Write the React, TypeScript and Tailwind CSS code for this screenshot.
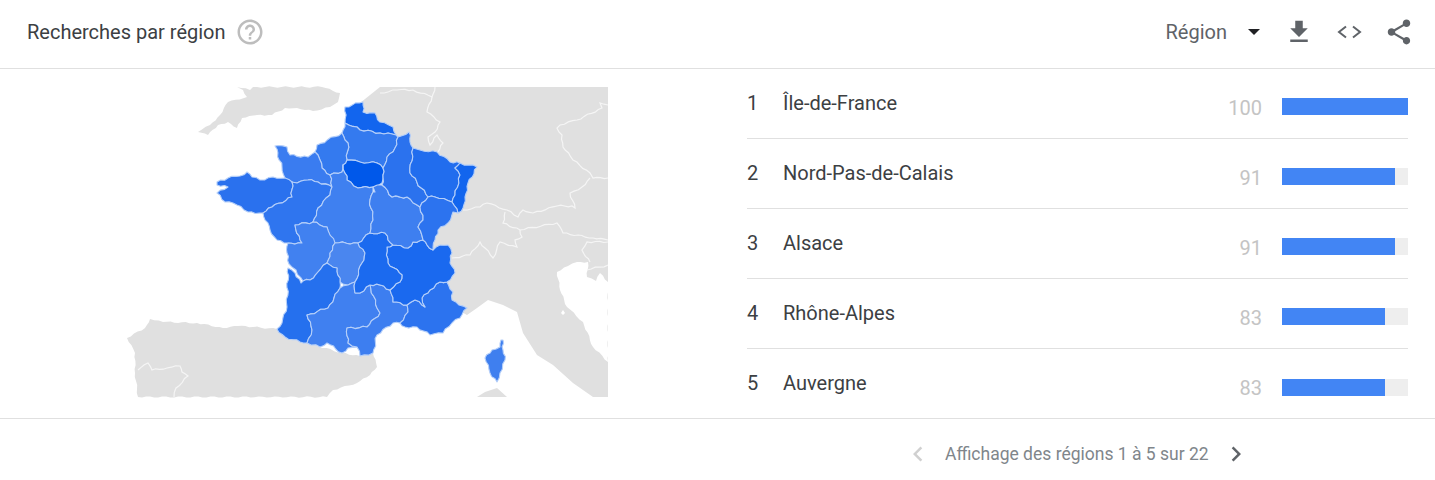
import React from 'react';

const rows = [
  { rank: 1, name: 'Île-de-France', value: 100, width: 100 },
  { rank: 2, name: 'Nord-Pas-de-Calais', value: 91, width: 90 },
  { rank: 3, name: 'Alsace', value: 91, width: 90 },
  { rank: 4, name: 'Rhône-Alpes', value: 83, width: 82 },
  { rank: 5, name: 'Auvergne', value: 83, width: 82 },
];

const regions: { fill: string; points: string }[] = [
  { fill: '#1265ee', points: '345,107 363,102 363,112 375,113 380,122 393,127 396,135 380,133 360,130 357,127 345,123' },
  { fill: '#347aef', points: '345,123 357,127 360,130 380,133 396,135 398,137 395,148 387,157 383,168 377,163 360,162 347,160 348,143 342,133' },
  { fill: '#347aef', points: '342,133 317,145 315,152 318,155 322,168 330,175 342,172 343,165 347,160 348,143' },
  { fill: '#3a7cf0', points: '275,146 287,147 290,155 308,157 315,152 318,155 322,168 330,175 332,187 318,182 308,180 297,183 285,178 282,167' },
  { fill: '#2a71ee', points: '217,182 228,178 240,176 247,172 252,177 260,180 273,177 285,178 292,182 292,197 272,207 263,213 248,212 233,203 225,202 217,193 228,187 217,185' },
  { fill: '#2f75ef', points: '292,182 297,183 308,180 318,182 332,187 330,195 318,208 313,222 295,225 300,240 302,243 288,243 277,240 270,230 263,213 272,207 292,197' },
  { fill: '#0058ea', points: '343,165 347,160 360,162 377,163 383,168 383,175 382,183 373,187 358,188 347,180' },
  { fill: '#3f80f0', points: '330,175 342,172 343,165 347,180 358,188 373,187 373,192 370,200 373,220 370,233 358,243 335,243 332,238 327,227 313,222 318,208 330,195 332,187' },
  { fill: '#4181f0', points: '295,225 313,222 327,227 335,243 330,253 327,263 318,272 310,280 303,281 296,270 289,264 287,253 288,243 302,243 300,240' },
  { fill: '#4a86ef', points: '330,253 335,243 358,243 365,253 362,263 355,282 348,285 340,282 337,268 327,263' },
  { fill: '#2570ee', points: '288,268 295,273 301,283 303,281 310,280 318,272 327,263 337,268 340,282 340,288 328,308 307,315 312,330 307,343 300,342 285,337 277,329 282,323 287,307' },
  { fill: '#4080f0', points: '307,343 312,330 307,315 328,308 340,288 348,285 355,282 355,293 360,293 370,285 377,308 380,313 367,327 347,328 348,343 357,347 348,348 342,353 327,343 320,347' },
  { fill: '#3d7ef0', points: '370,285 380,285 390,290 393,302 407,305 408,312 400,323 393,323 377,335 373,353 360,356 357,347 348,343 347,328 367,327 380,313 377,308' },
  { fill: '#2c73ef', points: '407,305 415,300 425,307 422,298 430,290 440,282 447,282 453,292 452,300 467,308 460,318 452,323 443,333 430,335 417,327 405,327 400,323 408,312' },
  { fill: '#1a69ef', points: '387,247 388,263 402,275 400,282 390,290 393,302 407,305 415,300 425,307 422,298 430,290 440,282 447,282 455,273 450,263 452,253 448,245 440,245 433,250 427,245 423,240 413,242 408,248 393,245' },
  { fill: '#1b6aef', points: '370,233 385,233 388,240 393,245 387,247 388,263 402,275 400,282 390,290 380,285 370,285 360,293 355,293 355,282 362,263 365,253 358,243' },
  { fill: '#3e7ff0', points: '373,192 375,192 373,187 382,185 392,197 407,197 420,207 423,220 418,227 423,240 413,242 408,248 393,245 388,240 385,233 370,233 373,220 370,200' },
  { fill: '#2b72ee', points: '398,137 409,132 410,142 413,148 410,173 428,197 420,207 407,197 392,197 382,185 383,175 383,168 387,157 395,148' },
  { fill: '#216dee', points: '413,148 420,150 437,152 450,162 460,163 455,168 460,175 455,195 452,202 435,197 428,197 410,173' },
  { fill: '#1265ee', points: '460,163 477,167 468,183 465,197 463,208 458,213 452,202 455,195 460,175 455,168' },
  { fill: '#2c73ef', points: '428,197 435,197 452,202 458,213 453,212 448,223 438,230 435,240 433,250 427,245 423,240 418,227 423,220 420,207' },
  { fill: '#3f7fef', points: '501,340 503,340 503,350 505,360 500,373 497,382 490,373 485,358 492,350 500,347' },
];

const greyBorders = [
  '380,93 397,90 413,90 432,97 435,87',
  '432,97 427,112 440,122 435,132 428,137 430,145 437,135 443,143 438,152',
  '608,105 600,103 602,108 577,120 560,125 557,128 562,135 563,147 573,160 590,173 593,178 608,178',
  '590,178 582,187 570,193 575,208 572,206 557,206 533,213 523,210 518,217 507,210 487,203 480,207 463,210',
  '505,212 503,223 520,230 557,223 563,233 593,238 608,240',
  '452,258 470,255 480,242 493,258 500,242 517,247 515,240 522,237 520,230',
  '608,242 587,242 582,250 590,262',
  '587,270 608,265',
  '138,370 148,363 152,370 167,368 180,366 182,372 188,376 176,388 174,397',
];

// splits each edge and nudges the new points so the outlines look like map data.
// the nudge depends only on the edge, so neighbouring regions keep the same border
function roughen(points: string, closed: boolean, amount = 1.1) {
  const pts = points.split(' ').map((p) => p.split(',').map(Number));
  const out: number[][] = [];
  const count = closed ? pts.length : pts.length - 1;
  for (let i = 0; i < count; i++) {
    const a = pts[i];
    const b = pts[(i + 1) % pts.length];
    const forward = a[0] < b[0] || (a[0] === b[0] && a[1] < b[1]);
    const [s, e] = forward ? [a, b] : [b, a];
    const len = Math.hypot(e[0] - s[0], e[1] - s[1]);
    const steps = Math.max(1, Math.round(len / 4));
    const mid: number[][] = [];
    for (let k = 1; k < steps; k++) {
      const t = k / steps;
      const n = Math.sin(s[0] * 12.9 + s[1] * 78.2 + e[0] * 37.7 + e[1] * 11.3 + k * 4.7) * amount;
      mid.push([s[0] + (e[0] - s[0]) * t - ((e[1] - s[1]) / len) * n, s[1] + (e[1] - s[1]) * t + ((e[0] - s[0]) / len) * n]);
    }
    if (!forward) mid.reverse();
    out.push(a, ...mid);
  }
  if (!closed) out.push(pts[pts.length - 1]);
  return out.map((p) => `${p[0].toFixed(1)},${p[1].toFixed(1)}`).join(' ');
}

function FranceMap() {
  return (
    <svg width="496" height="312" viewBox="112 86 496 312" className="block">
      {/* grey land */}
      <polygon
        fill="#e0e0e0"
        points={roughen('237,87 250,90 253,87 322,87 340,93 338,102 330,107 313,111 297,108 285,108 272,115 257,115 242,118 237,128 228,122 218,125 208,135 198,132 210,125 220,115 228,102 247,97 243,90', true, 0.7)}
      />
      <polygon
        fill="#e0e0e0"
        points="360,103 380,87 608,87 608,397 593,397 573,383 553,365 537,355 523,333 517,312 503,305 488,300 477,308 467,315 440,300 400,200"
      />
      <polygon
        fill="#ffffff"
        points={roughen('557,272 568,266 577,262 588,262 587,277 596,281 600,273 608,282 608,362 593,347 583,322 567,307 560,290', true, 0.7)}
      />
      <polygon
        fill="#e0e0e0"
        points={roughen('277,329 253,327 238,326 223,328 197,323 163,322 150,319 145,328 127,338 135,353 135,373 138,397 327,397 333,390 357,383 370,375 377,367 373,353 360,356 342,353 307,343', true, 0.7)}
      />
      <polygon fill="#e0e0e0" points="477,397 485,392 497,388 507,397" />
      <polygon fill="#ffffff" points="561,313 563,310 565,313 563,315" />
      {greyBorders.map((points) => (
        <polyline key={points} points={roughen(points, false, 0.8)} fill="none" stroke="#f5f5f5" strokeWidth="1.2" />
      ))}
      {regions.map((r) => (
        <polygon key={r.points} points={roughen(r.points, true)} fill={r.fill} stroke="#b5cff9" strokeWidth="1.1" strokeLinejoin="round" />
      ))}
    </svg>
  );
}

function MaterialIcon({ d, size = 24, className = '' }: { d: string; size?: number; className?: string }) {
  return (
    <svg width={size} height={size} viewBox="0 0 24 24" fill="currentColor" className={className}>
      <path d={d} />
    </svg>
  );
}

export default function App() {
  return (
    <div className="w-[1435px] h-[480px] bg-white overflow-hidden font-['Roboto',sans-serif]">
      {/* Header */}
      <div className="h-[69px] border-b border-[#e0e0e0] flex items-center pl-[27px] pr-[21px] pb-[5px]">
        <span className="text-[20px] text-[#3c4043]">Recherches par région</span>
        <MaterialIcon
          size={30}
          className="ml-[9px] text-[#bdbdbd]"
          d="M11 18h2v-2h-2v2zm1-16C6.48 2 2 6.48 2 12s4.48 10 10 10 10-4.48 10-10S17.52 2 12 2zm0 18c-4.41 0-8-3.59-8-8s3.59-8 8-8 8 3.59 8 8-3.59 8-8 8zm0-14c-2.21 0-4 1.79-4 4h2c0-1.1.9-2 2-2s2 .9 2 2c0 2-3 1.75-3 5h2c0-2.25 3-2.5 3-5 0-2.21-1.79-4-4-4z"
        />
        <div className="ml-auto flex items-center text-[#5f6368]">
          <span className="text-[20px] text-[#5f6368]">Région</span>
          <span className="ml-[21px] w-0 h-0 border-x-[6px] border-x-transparent border-t-[6px] border-t-[#202124]" />
          <MaterialIcon className="ml-[24px]" d="M19 9h-4V3H9v6H5l7 7 7-7zM5 18v2h14v-2H5z" size={30} />
          <svg width="25" height="14" viewBox="0 0 25 14" fill="none" stroke="currentColor" strokeWidth="2" className="ml-[23px]">
            <path d="M9 1.5 2 7l7 5.5M16 1.5 23 7l-7 5.5" />
          </svg>
          <MaterialIcon
            className="ml-[22px]"
            size={30}
            d="M18 16.08c-.76 0-1.44.3-1.96.77L8.91 12.7c.05-.23.09-.46.09-.7s-.04-.47-.09-.7l7.05-4.11c.54.5 1.25.81 2.04.81 1.66 0 3-1.34 3-3s-1.34-3-3-3-3 1.34-3 3c0 .24.04.47.09.7L8.04 9.81C7.5 9.31 6.79 9 6 9c-1.66 0-3 1.34-3 3s1.34 3 3 3c.79 0 1.5-.31 2.04-.81l7.12 4.16c-.05.21-.08.43-.08.65 0 1.61 1.31 2.92 2.92 2.92s2.92-1.31 2.92-2.92-1.31-2.92-2.92-2.92z"
          />
        </div>
      </div>

      {/* Body */}
      <div className="h-[349px] flex">
        <div className="w-[747px] pl-[112px] pt-[17px] shrink-0">
          <FranceMap />
        </div>
        <div className="w-[661px]">
          {rows.map((row, i) => (
            <div
              key={row.rank}
              className={`h-[70px] flex items-center ${i < rows.length - 1 ? 'border-b border-[#e0e0e0]' : ''}`}
            >
              <span className="w-[36px] text-[20px] text-[#3c4043] pb-[2px]">{row.rank}</span>
              <span className="text-[20px] text-[#3c4043] pb-[2px]">{row.name}</span>
              <span className="ml-auto text-[20px] text-[#c4c4c4] pt-[8px]">{row.value}</span>
              <div className="ml-[20px] w-[126px] h-[17px] bg-[#eeeeee] mt-[6px]">
                <div className="h-full bg-[#4285f4]" style={{ width: `${row.width}%` }} />
              </div>
            </div>
          ))}
        </div>
      </div>

      {/* Footer */}
      <div className="border-t border-[#e0e0e0] h-[62px] flex items-center pl-[903px] pt-[9px]">
        <MaterialIcon size={30} className="text-[#d0d0d0]" d="M15.41 7.41L14 6l-6 6 6 6 1.41-1.41L10.83 12z" />
        <span className="ml-[12px] text-[17.5px] text-[#80868b]">Affichage des régions 1 à 5 sur 22</span>
        <MaterialIcon size={30} className="ml-[12px] text-[#5f6368]" d="M8.59 16.59L10 18l6-6-6-6-1.41 1.41L13.17 12z" />
      </div>
    </div>
  );
}
